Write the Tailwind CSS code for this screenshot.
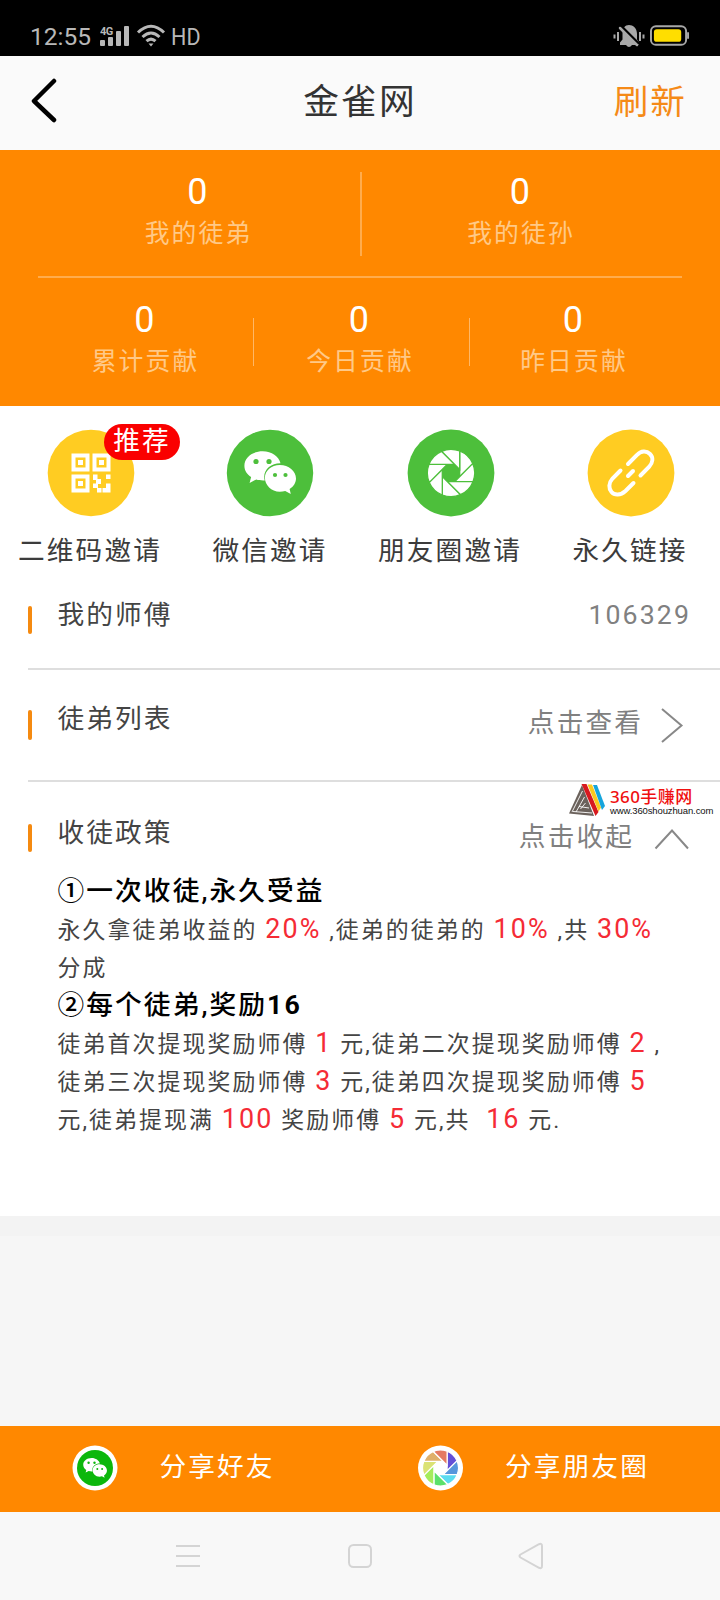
<!DOCTYPE html>
<html lang="zh-CN">
<head>
<meta charset="utf-8">
<title>金雀网</title>
<script src="https://cdn.jsdelivr.net/npm/@tailwindcss/browser@4"></script>
</head>
<body class="bg-[#f7f7f7]">
<svg class="hidden">
  <defs>
    <g id="wechat">
      <path d="M-7.300-21.800c-10.300 0-18.300 6.300-18.300 14.600 0 4.800 2.600 8.600 6.700 11.300l-1.500 5.800 6.600-3.400c2.200.6 4.300.9 7 .9h1.500c-.3-1.200-.5-2.400-.5-3.500 0-8.200 7.700-13.900 16.300-13.700C8.900-16.700 1.700-21.800-7.300-21.800z"/>
      <path d="M9.800-8C1.300-8-5.100-2.300-5.100 4.800S1.300 18.800 9.800 18.800c1.900 0 3.700-.3 5.400-.8l5.600 3-1.200-4.900C23.500 13.600 26 9.700 26 5.500 26-1.800 18.600-8 9.800-8z"/>
    </g>
    <path id="blade" d="M8.700-22V3.600L21.700-9.400A23.600 23.600 0 0 0 8.700-22z"/>
  </defs>
</svg>
<main class="w-[720px] h-[1600px] flex flex-col overflow-hidden text-[#444] text-[26.700px] tracking-[2.100px] font-['Roboto','Noto_Sans_CJK_SC',sans-serif] whitespace-nowrap">

  <div class="h-14 shrink-0 bg-black flex items-start pt-6 pl-[30px] pr-[30px] text-[#b8b8b8] tracking-normal">
    <span class="text-[24.500px] leading-[26px]">12:55</span>
    <svg class="ml-[9px]" width="30" height="24" viewBox="0 0 30 24" fill="#b8b8b8"><text x="0" y="10.500" font-size="11" font-weight="700" font-family="Roboto" letter-spacing="-.5">4G</text><rect x="0" y="16" width="5" height="6" rx="1"/><rect x="8" y="13" width="5" height="9" rx="1"/><rect x="16" y="7" width="5" height="15" rx="1"/><rect x="24" y="2" width="5" height="20" rx="1"/></svg>
    <svg class="ml-[6px]" width="30" height="24" viewBox="0 0 30 24" fill="none" stroke="#b8b8b8" stroke-width="3"><path d="M2 8.500Q15-4 28 8.500M6.500 13Q15 5 23.500 13M10.500 17.200Q15 13 19.500 17.200"/><path d="M12.500 19.500h5L15 22.500z" fill="#b8b8b8" stroke="none"/></svg>
    <span class="ml-[5px] text-[24.500px] leading-[26px] origin-left scale-x-[.88]">HD</span>
    <svg class="ml-auto" width="32" height="25" viewBox="0 0 32 25" fill="#a8a8a8"><path d="M7 21v-2.500l2.500-3V10C9.500 4 12 1 16 1s8 3 8 9v5.500l2 3V21h-7q-3 4-6 0z"/><path d="M1.500 10.500v4M5 8v9M27 8v9M30.500 10.500v4" stroke="#a8a8a8" stroke-width="2" fill="none"/><path d="M9 3l17 17" stroke="#000" stroke-width="2.500"/><path d="M7 4l17 17" stroke="#a8a8a8" stroke-width="2.500" stroke-linecap="round"/></svg>
    <svg class="ml-[5px]" width="40" height="24" viewBox="0 0 41 24"><rect x="1" y="2" width="36" height="19" rx="5" fill="none" stroke="#a8a8a8" stroke-width="2"/><rect x="4" y="5" width="28" height="13" rx="3" fill="#ffde00"/><rect x="38" y="8" width="2" height="7" rx="1" fill="#a8a8a8"/></svg>
  </div>

  <header class="h-[94px] shrink-0 bg-[#fafafa] grid grid-cols-3 items-center text-[35.700px]">
    <svg class="ml-[29px] -mt-[7px]" width="30" height="46" viewBox="0 0 30 46" fill="none" stroke="#000" stroke-width="4.500" stroke-linecap="round" stroke-linejoin="round"><path d="M25 4L5 24 25 43"/></svg>
    <h1 class="text-center text-[#333]">金雀网</h1>
    <span class="text-right pr-[33px] text-[#f58a17] text-[34.600px]">刷新</span>
  </header>

  <section class="h-[256px] shrink-0 bg-[#ff8800] px-[38px] text-center text-[#ffc987] text-[24.800px]">
    <div class="h-[126px] grid grid-cols-[324px_1fr] pt-[22px]">
      <div class="h-[84px] pr-px border-r-2 border-white/30"><b class="block font-normal text-white text-[36px] leading-[40px]">0</b><span class="block leading-[43px]">我的徒弟</span></div>
      <div class="h-[84px] pr-0.5"><b class="block font-normal text-white text-[36px] leading-[40px]">0</b><span class="block leading-[43px]">我的徒孙</span></div>
    </div>
    <div class="h-0.5 bg-white/30"></div>
    <div class="grid grid-cols-[215px_1px_215px_1px_1fr] items-center pt-[18px]">
      <div><b class="block font-normal text-white text-[36px] leading-[48px]">0</b><span class="block leading-[36px]">累计贡献</span></div>
      <i class="w-px h-12 bg-white/40 mt-[8px]"></i>
      <div class="pr-[3px]"><b class="block font-normal text-white text-[36px] leading-[48px]">0</b><span class="block leading-[36px]">今日贡献</span></div>
      <i class="w-px h-12 bg-white/40 mt-[8px]"></i>
      <div class="pr-1"><b class="block font-normal text-white text-[36px] leading-[48px]">0</b><span class="block leading-[36px]">昨日贡献</span></div>
    </div>
  </section>

  <section class="h-[810px] shrink-0 bg-white">
    <nav class="grid grid-cols-4 h-[174px] pt-[23px] text-center text-[#3c3c3c]">
      <div class="relative flex flex-col items-center">
        <svg width="88" height="88" viewBox="-44 -44 88 88" class="ml-[2px]"><circle r="43.300" fill="#ffcc22"/><g fill="none" stroke="#fff" stroke-width="4"><path d="M-17.500-17.500h14v14h-14zM3.500-17.500h14v14h-14zM-17.500 3.500h14v14h-14z"/></g><path fill="#fff" d="M-13-13h5v5h-5zM8-13h5v5h-5zM-13 8h5v5h-5zM2 1.500h4.500v4.500H10v5H7v4h3.500v4.500H6V15H2v-4.500h3V7H2zM15 1.500h4.500V6H15zM15 10.500h4.500v9h-8V15H15z"/></svg>
        <span class="leading-[44px] mt-[12px]">二维码邀请</span>
        <span class="absolute left-[104px] top-[-5px] w-[76px] h-9 rounded-full bg-[#fa0000] text-white leading-[34px]">推荐</span>
      </div>
      <div class="flex flex-col items-center">
        <svg width="88" height="88" viewBox="-44 -44 88 88"><circle r="43.200" fill="#4dbf3b"/><use href="#wechat" fill="#fff"/><g fill="#4dbf3b"><circle cx="-14" cy="-11.500" r="2.600"/><circle cx="-1" cy="-11.500" r="2.600"/><circle cx="5" cy="2" r="2.100"/><circle cx="15.500" cy="2" r="2.100"/></g></svg>
        <span class="leading-[44px] mt-[12px]">微信邀请</span>
      </div>
      <div class="flex flex-col items-center">
        <svg width="88" height="88" viewBox="-44 -44 88 88" class="ml-[2px]"><circle r="43.400" fill="#4dbf3b"/><g fill="#fff" stroke="#4dbf3b" stroke-width="1.300"><use href="#blade"/><use href="#blade" transform="rotate(45)"/><use href="#blade" transform="rotate(90)"/><use href="#blade" transform="rotate(135)"/><use href="#blade" transform="rotate(180)"/><use href="#blade" transform="rotate(225)"/><use href="#blade" transform="rotate(270)"/><use href="#blade" transform="rotate(315)"/></g></svg>
        <span class="leading-[44px] mt-[12px]">朋友圈邀请</span>
      </div>
      <div class="flex flex-col items-center">
        <svg width="88" height="88" viewBox="-44 -44 88 88" class="ml-[2px]"><circle r="43.400" fill="#ffcc22"/><g fill="none" stroke="#fff" stroke-width="4" stroke-linecap="round"><path d="M-3-9L6-18C10-22.500 15.500-22.500 19-19S22-10.500 18-6L9.500 2.500"/><path d="M-10.500-2.500L-18.500 5.500C-22.500 10-22.500 15.500-19.500 19S-10.500 22.500-5.500 18L2.500 10"/><path d="M-3 3L2-2"/></g></svg>
        <span class="leading-[44px] mt-[12px]">永久链接</span>
      </div>
    </nav>

    <div class="ml-7 h-[90px] border-b-2 border-[#dedede] flex items-start">
      <i class="w-1 h-7 mt-[26px] rounded-sm bg-[#f58a10]"></i>
      <span class="ml-[25.500px] mt-[15px] leading-[40px]">我的师傅</span>
      <span class="ml-auto mr-[29px] mt-[15px] leading-[40px] text-[#808080]">106329</span>
    </div>
    <div class="ml-7 h-[112px] border-b-2 border-[#dedede] flex items-start">
      <i class="w-1 h-[30px] mt-[40px] rounded-sm bg-[#f58a10]"></i>
      <span class="ml-[25.500px] mt-[29px] leading-[40px]">徒弟列表</span>
      <span class="ml-auto mt-[33px] leading-[40px] text-[#808080]">点击查看</span>
      <svg class="ml-[17px] mr-[36px] mt-[37px]" width="24" height="37" viewBox="0 0 24 37" fill="none" stroke="#888" stroke-width="2"><path d="M2 2L21.500 18.500 2 35"/></svg>
    </div>
    <div class="relative ml-7 h-[90px] flex items-start">
      <i class="w-1 h-7 mt-[42px] rounded-sm bg-[#f58a10]"></i>
      <span class="ml-[25.500px] mt-[31px] leading-[40px]">收徒政策</span>
      <span class="ml-auto mt-[35px] leading-[40px] text-[#808080]">点击收起</span>
      <svg class="ml-[20px] mr-[31px] mt-[46px]" width="35" height="22" viewBox="0 0 35 22" fill="none" stroke="#888" stroke-width="2"><path d="M1.500 20.500L18 2.500 34 20.500"/></svg>
      <div class="absolute left-[541px] top-[1px] flex tracking-normal">
        <svg width="36" height="34" viewBox="0 0 36 34"><path d="M13 2L0 30.500 25 33z" fill="#6b625c"/><path d="M13.500 8L3 29M15.500 14L7 29M16.500 20l-5 6M4 28.500l19 1.500M10 23.500l10 1.500" stroke="#fff" stroke-width=".9"/><path d="M12.500 1h5l12 28-3 4z" fill="#d7191f"/><path d="M18.500 1.500h4.500l9 23-2.500 4z" fill="#fbc91d"/><path d="M24 2h4l8 21-3 4z" fill="#16a5dc"/></svg>
        <div class="ml-[5px] w-[104px]"><div class="text-[#f01010] text-[17px] leading-[20px] mt-[4px] font-medium font-['Noto_Sans','Noto_Sans_CJK_SC',sans-serif] tracking-[0.400px]">360手赚网</div><div class="text-[#111] text-[9.500px] leading-[10px] -mt-px tracking-[-0.120px] font-['Liberation_Sans',sans-serif]">www.360shouzhuan.com</div></div>
      </div>
    </div>

    <div class="ml-[57.500px] pt-[2px] text-[22.900px] leading-[37.900px] [&_em]:not-italic [&_em]:text-[#f52b35] [&_em]:text-[26.900px] [&_em]:leading-[20px] [&_h2]:font-medium [&_h2]:text-black [&_h2]:text-[26.700px] [&_h2]:leading-[35px] [&_h2]:pb-[3px]">
      <h2>①一次收徒,永久受益</h2>
      <p>永久拿徒弟收益的 <em>20%</em> ,徒弟的徒弟的 <em>10%</em> ,共 <em>30%</em><br>分成</p>
      <h2>②每个徒弟,奖励<span class="font-bold">16</span></h2>
      <p>徒弟首次提现奖励师傅 <em>1</em> 元,徒弟二次提现奖励师傅 <em>2</em> ,<br>徒弟三次提现奖励师傅 <em>3</em> 元,徒弟四次提现奖励师傅 <em>5</em><br>元,徒弟提现满 <em>100</em> 奖励师傅 <em>5</em> 元,共&nbsp; <em>16</em> 元.</p>
    </div>
  </section>

  <div class="h-[210px] shrink-0 bg-[#f6f6f6] border-t-[20px] border-[#f3f3f3]"></div>

  <footer class="h-[86px] shrink-0 bg-[#ff8800] grid grid-cols-[346px_1fr] text-white">
    <div class="flex items-start pl-[71.500px] pt-[18.500px]">
      <svg width="46" height="46" viewBox="-23 -23 46 46"><circle r="22.500" fill="#fff"/><circle r="18" fill="#0cb70c"/><use href="#wechat" fill="#fff" transform="scale(.46)"/><g fill="#0cb70c"><circle cx="-6.400" cy="-5.300" r="1.200"/><circle cx="-.5" cy="-5.300" r="1.200"/><circle cx="2.300" cy="1" r="1"/><circle cx="7.100" cy="1" r="1"/></g></svg>
      <span class="ml-[42px] mt-[1.500px] leading-[42px]">分享好友</span>
    </div>
    <div class="flex items-start pl-[72px] pt-[19px]">
      <svg width="46" height="46" viewBox="-23 -23 46 46"><circle cx="-.5" r="22.500" fill="#fff"/><g transform="translate(-.5) scale(.76)" stroke="#fff" stroke-width="1.600"><use href="#blade" fill="#6550d6"/><use href="#blade" transform="rotate(45)" fill="#5796dc"/><use href="#blade" transform="rotate(90)" fill="#5bdcf0"/><use href="#blade" transform="rotate(135)" fill="#5be06a"/><use href="#blade" transform="rotate(180)" fill="#a5ec5c"/><use href="#blade" transform="rotate(225)" fill="#dbe274"/><use href="#blade" transform="rotate(270)" fill="#dfb06a"/><use href="#blade" transform="rotate(315)" fill="#e57a62"/></g></svg>
      <span class="ml-[41px] mt-px leading-[42px]">分享朋友圈</span>
    </div>
  </footer>

  <nav class="h-[88px] shrink-0 bg-[#f8f8f8] flex items-start pl-[175px] pt-[30px]">
    <svg width="370" height="28" viewBox="0 0 370 28" fill="none" stroke="#d4d4d4" stroke-width="2"><path d="M1 4h24M1 14h24M1 24h24"/><rect x="174" y="3" width="22" height="22" rx="4.500"/><path d="M345.500 12.500L364 2.200Q367 1 367 4v20Q367 27 364 25.800L345.500 15.500Q343.500 14 345.500 12.500z"/></svg>
  </nav>
</main>
</body>
</html>
